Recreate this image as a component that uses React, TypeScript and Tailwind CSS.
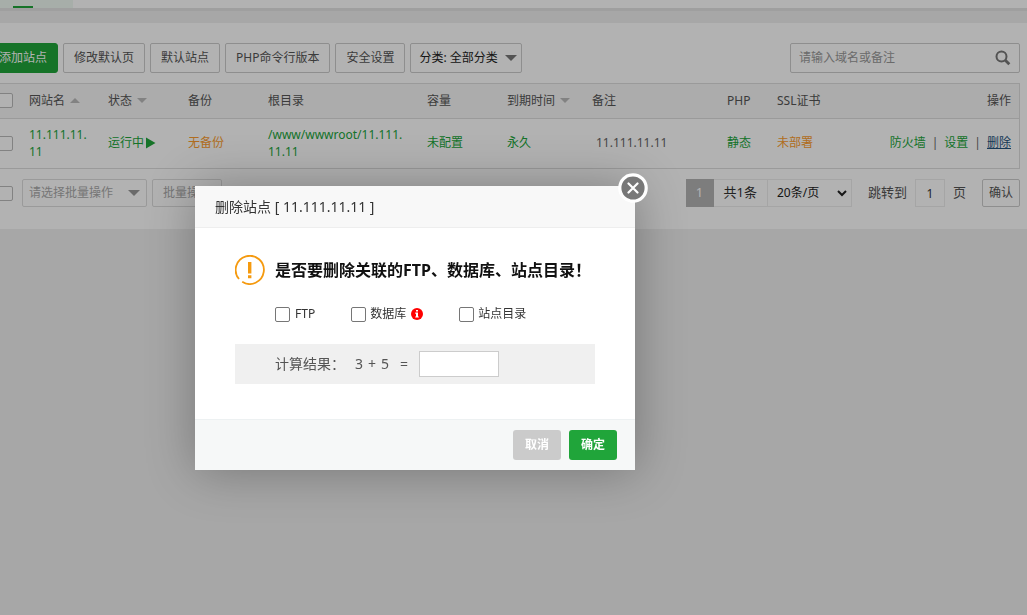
import React from 'react';
import { clsx } from 'clsx';

interface Site {
  name: string;
  status: string;
  backup: string;
  path: string;
  quota: string;
  expire: string;
  remark: string;
  php: string;
  ssl: string;
}

const sites: Site[] = [
  {
    name: '11.111.11.11',
    status: '运行中',
    backup: '无备份',
    path: '/www/wwwroot/11.111.11.11',
    quota: '未配置',
    expire: '永久',
    remark: '11.111.11.11',
    php: '静态',
    ssl: '未部署',
  },
];

const toolbar = ['修改默认页', '默认站点', 'PHP命令行版本', '安全设置'];

function Caret({ up, className }: { up?: boolean; className?: string }) {
  return (
    <svg viewBox="0 0 10 5" className={clsx('pointer-events-none', className)} fill="currentColor" aria-hidden="true">
      <path d={up ? 'M0 5L5 0L10 5Z' : 'M0 0H10L5 5Z'} />
    </svg>
  );
}

function Checkbox({ label, className }: { label?: string; className?: string }) {
  return (
    <input
      type="checkbox"
      aria-label={label}
      className={clsx('block size-[15px] shrink-0 appearance-none rounded-xs border bg-white', className)}
    />
  );
}

function Toolbar() {
  return (
    <div className="flex items-center justify-between">
      <div className="flex gap-[5px]">
        <button className="h-[30px] rounded-[3px] border border-[#20a53a] bg-[#20a53a] px-2.5 text-white">添加站点</button>
        {toolbar.map((item) => (
          <button key={item} className="h-[30px] rounded-xs border border-[#ccc] bg-white px-2.5">
            {item}
          </button>
        ))}
        <div className="relative">
          <select aria-label="分类" className="h-[30px] w-28 appearance-none rounded-xs border border-[#ccc] bg-white pl-2 text-[#222]">
            <option>分类: 全部分类</option>
          </select>
          <Caret className="absolute top-3 right-[5px] h-[6px] w-3 text-[#777]" />
        </div>
      </div>
      <div className="flex h-[30px] w-[230px] items-center rounded-xs border border-[#ccc] bg-white pr-2 pl-2">
        <input
          type="text"
          aria-label="搜索"
          placeholder="请输入域名或备注"
          className="min-w-0 flex-1 outline-none placeholder:text-[#999]"
        />
        <button aria-label="搜索" className="text-[#777]">
          <svg viewBox="0 0 16 16" className="size-4" fill="none" stroke="currentColor" aria-hidden="true">
            <circle cx="6.5" cy="6.5" r="5" strokeWidth="2" />
            <path d="M10.3 10.3L14.3 14.3" strokeWidth="2.8" />
          </svg>
        </button>
      </div>
    </div>
  );
}

function SiteTable() {
  return (
    <div className="mt-2.5 border border-[#ddd]">
      <table className="w-full table-fixed text-left [&_td]:px-2 [&_th]:px-2 [&_th]:font-normal">
        <colgroup>
          <col className="w-8" />
          <col className="w-[79px]" />
          <col className="w-20" />
          <col className="w-20" />
          <col className="w-[159px]" />
          <col className="w-20" />
          <col className="w-[85px]" />
          <col className="w-[135px]" />
          <col className="w-[50px]" />
          <col className="w-20" />
          <col />
        </colgroup>
        <thead>
          <tr className="h-[34px] border-b border-[#ddd] bg-[#f6f6f6]">
            <th>
              <Checkbox label="全选" className="ml-auto border-[#bbb]" />
            </th>
            <th>
              <span className="flex items-center gap-[5px]">
                网站名
                <Caret up className="h-[5px] w-2.5 text-[#bbb]" />
              </span>
            </th>
            <th>
              <span className="flex items-center gap-[5px]">
                状态
                <Caret className="h-[5px] w-2.5 text-[#bbb]" />
              </span>
            </th>
            <th>备份</th>
            <th>根目录</th>
            <th>容量</th>
            <th>
              <span className="flex items-center gap-[5px] whitespace-nowrap">
                到期时间
                <Caret className="h-[5px] w-2.5 text-[#bbb]" />
              </span>
            </th>
            <th>备注</th>
            <th>PHP</th>
            <th>SSL证书</th>
            <th className="text-right">操作</th>
          </tr>
        </thead>
        <tbody>
          {sites.map((site) => (
            <tr key={site.name} className="h-[50px] text-[#20a53a]">
              <td>
                <Checkbox label={site.name} className="ml-auto border-[#bbb]" />
              </td>
              <td className="leading-[17px] break-all">
                <a href="#site">{site.name}</a>
              </td>
              <td>
                <a href="#status" className="flex items-center gap-[2px]">
                  {site.status}
                  <svg viewBox="0 0 10 12" className="h-3 w-2.5" fill="currentColor" aria-hidden="true">
                    <path d="M0 0.5L9.5 6L0 11.5Z" />
                  </svg>
                </a>
              </td>
              <td>
                <a href="#backup" className="text-[#fc9d2e]">{site.backup}</a>
              </td>
              <td className="leading-[17px] break-all">
                <a href="#path" className="block pr-1">{site.path}</a>
              </td>
              <td>
                <a href="#quota">{site.quota}</a>
              </td>
              <td>
                <a href="#expire">{site.expire}</a>
              </td>
              <td className="text-[#666]">
                <span className="pl-1">{site.remark}</span>
              </td>
              <td>
                <a href="#php">{site.php}</a>
              </td>
              <td>
                <a href="#ssl" className="text-[#fc9d2e]">{site.ssl}</a>
              </td>
              <td>
                <div className="flex justify-end gap-[6px]">
                  <a href="#firewall">防火墙</a>
                  <span className="text-[#666]">|</span>
                  <a href="#config">设置</a>
                  <span className="text-[#666]">|</span>
                  <a href="#delete" className="text-[#23527c] underline">删除</a>
                </div>
              </td>
            </tr>
          ))}
        </tbody>
      </table>
    </div>
  );
}

function TableFooter() {
  return (
    <div className="mt-2.5 flex items-center justify-between">
      <div className="flex items-center pl-2.5">
        <Checkbox label="选择全部站点" className="border-[#bbb]" />
        <div className="relative ml-[9px]">
          <select
            disabled
            aria-label="批量操作"
            className="block h-7 w-[125px] appearance-none rounded-xs border border-[#ddd] bg-white pl-[6px] text-[#aaa] opacity-100"
          >
            <option>请选择批量操作</option>
          </select>
          <Caret className="absolute top-[11px] right-[7px] h-[6px] w-3 text-[#999]" />
        </div>
        <button disabled className="ml-[5px] h-7 rounded-xs border border-[#ddd] bg-white px-2.5 text-[#aaa]">
          批量操作
        </button>
      </div>
      <div className="flex items-center text-[13px]">
        <span className="flex h-7 w-7 items-center justify-center bg-[#b3b3b3] text-white">1</span>
        <span className="flex h-7 items-center border-y border-[#ececec] px-2.5 text-[#333]">共1条</span>
        <div className="relative">
          <select aria-label="每页条数" className="block h-7 w-[85px] appearance-none border border-[#ececec] bg-white pl-[9px] text-xs text-[#222]">
            <option>20条/页</option>
          </select>
          <svg viewBox="0 0 10 7" className="pointer-events-none absolute top-[11px] right-[5px] h-[7px] w-2.5 text-[#222]" fill="none" stroke="currentColor" strokeWidth="2" aria-hidden="true">
            <path d="M1 1L5 5L9 1" />
          </svg>
        </div>
        <label htmlFor="jump" className="ml-4">跳转到</label>
        <input id="jump" type="text" defaultValue="1" className="mx-2 h-7 w-[30px] border border-[#ececec] bg-white text-center text-xs text-[#333]" />
        <span>页</span>
        <button className="ml-4 h-7 w-[38px] rounded-xs border border-[#ccc] bg-white text-xs">确认</button>
      </div>
    </div>
  );
}

function DeleteDialog() {
  return (
    <div
      role="dialog"
      aria-labelledby="dialog-title"
      className="absolute top-[186px] left-[195px] w-[440px] rounded-xs bg-white text-[#333] shadow-[1px_1px_50px_rgba(0,0,0,0.3)]"
    >
      <h2 id="dialog-title" className="h-[42px] border-b border-[#eee] bg-[#f8f8f8] px-5 text-sm leading-[41px]">
        删除站点 [ 11.111.11.11 ]
      </h2>
      <button aria-label="关闭" className="absolute -top-[13px] -right-[13px] size-[30px]">
        <svg viewBox="0 0 30 30" fill="none" stroke="#fff" aria-hidden="true">
          <circle cx="15" cy="15" r="13.2" fill="#787878" strokeWidth="3.2" />
          <path d="M10.5 10.5L19.5 19.5M19.5 10.5L10.5 19.5" strokeWidth="2.2" strokeLinecap="round" />
        </svg>
      </button>

      <div className="px-10 pt-[27px] pb-[35px]">
        <div className="flex items-center gap-2.5">
          <svg viewBox="0 0 30 30" className="size-[30px]" aria-hidden="true">
            <path d="M4 24A14.1 14.1 0 1 1 7.2 26.8" fill="none" stroke="#f59a0f" strokeWidth="1.8" />
            <path d="M13 7H16.4V18.4H13Z M13 20.2H16.4V23.2H13Z" fill="#f59a0f" />
          </svg>
          <h3 className="text-base font-bold text-[#111]">是否要删除关联的FTP、数据库、站点目录！</h3>
        </div>

        <div className="mt-[19px] flex h-5 items-center pl-10 text-xs">
          <label className="flex items-center gap-[5px]">
            <Checkbox className="rounded-[3px] border-[#767676]" />
            FTP
          </label>
          <label className="ml-9 flex items-center gap-1">
            <Checkbox className="rounded-[3px] border-[#767676]" />
            数据库
          </label>
          <svg viewBox="0 0 12 12" className="ml-[5px] size-3" aria-hidden="true">
            <circle cx="6" cy="6" r="6" fill="red" />
            <path d="M5 2H7V3.6H5Z M4.2 4.6H7V8.4H7.8V9.6H4.2V8.4H5V5.8H4.2Z" fill="#fff" />
          </svg>
          <label className="ml-9 flex items-center gap-1">
            <Checkbox className="rounded-[3px] border-[#767676]" />
            站点目录
          </label>
        </div>

        <div className="mt-5 flex h-10 items-center bg-[#f0f0f0] pl-10 text-sm text-[#555]">
          <label htmlFor="answer">计算结果：</label>
          <span className="ml-2.5 flex gap-[5px]">
            <span>3</span>
            <span>+</span>
            <span>5</span>
          </span>
          <span className="mx-[11px]">=</span>
          <input id="answer" type="text" className="h-[26px] w-20 border border-[#ccc] bg-white px-2" />
        </div>
      </div>

      <div className="flex justify-end gap-2 border-t border-[#edf1f2] bg-[#f6f8f8] px-[18px] py-2.5 text-xs font-bold text-white">
        <button className="h-[30px] w-12 rounded-[3px] bg-[#cbcbcb]">取消</button>
        <button className="h-[30px] w-12 rounded-[3px] bg-[#20a53a]">确定</button>
      </div>
    </div>
  );
}

export default function App() {
  return (
    <div className="relative min-h-screen overflow-x-clip bg-[#f0f0f0] font-['Noto_Sans','Noto_Sans_CJK_SC',sans-serif] text-xs text-[#555]">
      <nav className="h-[11px] border-b-3 border-[#e4e4e4] bg-white">
        <div className="flex h-2 w-[73px] items-end bg-[#f0f9f2] pl-[13px]">
          <span className="h-[2px] w-5 bg-[#20a53a]" />
        </div>
      </nav>
      <main className="mt-3 -ml-3 bg-white pt-5 pr-[7px] pb-[22px]">
        <Toolbar />
        <SiteTable />
        <TableFooter />
      </main>
      <div className="fixed inset-0 bg-black/30" />
      <DeleteDialog />
    </div>
  );
}
